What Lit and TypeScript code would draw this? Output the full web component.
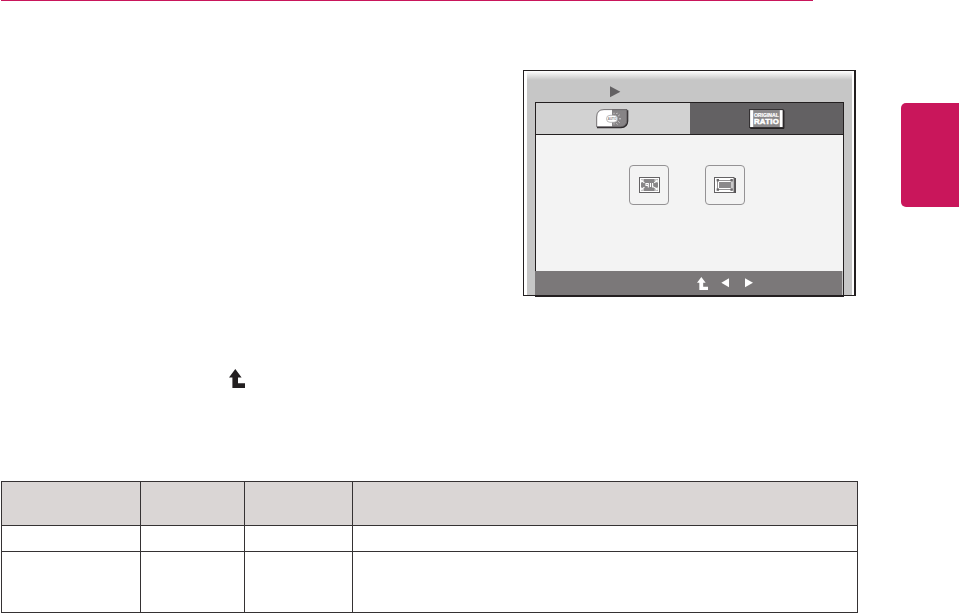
import { LitElement, html, css, svg } from "lit";
import { customElement, property } from "lit/decorators.js";

@customElement("osd-panel")
export class OsdPanel extends LitElement {
    autoIcon() {
        return html`
            <svg class="icon" width="34" height="21" viewBox="0 0 34 21">
                <path d="M8 1.2H32.3V12Q32 19.2 25 19.2H1V8Q1 1.2 8 1.2Z" fill="#2d2a2c" />
                <path d="M8 0.6H31V10.5Q31 17.8 24 17.8H0.7V8Q0.7 0.6 8 0.6Z" fill="#fff" />
                <path d="M16 0.6H31V10.5Q31 17.8 24 17.8H16Z" fill="#878486" />
                <path d="M8 0.6H31V10.5Q31 17.8 24 17.8H0.7V8Q0.7 0.6 8 0.6Z" fill="none" stroke="#555254" stroke-width="0.8" />
                <g stroke="#e4e3e4" stroke-width="1" stroke-linecap="round">
                    <path d="M18 4.2v.1M20.8 4.6l.3-.4M22.7 6.6l.5-.4M23.6 9.8h.8M22.7 12.8l.5.4M20.8 14.7l.3.4M18 14.9v.1" />
                </g>
                <rect x="10.5" y="6.3" width="11" height="7" rx="3.5" fill="#fff" stroke="#aaa8a9" stroke-width="0.8" />
                <text x="16" y="10.8" class="auto">AUTO</text>
            </svg>
        `;
    }

    ratioIcon() {
        return html`
            <svg class="icon" width="36" height="21" viewBox="0 0 36 21">
                <rect x="1" y="1" width="34.4" height="19" rx="1" fill="#242122" />
                <rect x="0.5" y="0.5" width="33.5" height="18" fill="#8b898b" stroke="#343133" />
                <rect x="1.2" y="1.2" width="3" height="16.8" fill="#fff" />
                <rect x="30.8" y="1.2" width="2.7" height="16.8" fill="#fff" />
                <text x="17.4" y="7.5" class="original" textLength="25" lengthAdjust="spacingAndGlyphs">ORIGINAL</text>
                <text x="17.4" y="15.3" class="ratio" textLength="25" lengthAdjust="spacing">RATIO</text>
            </svg>
        `;
    }

    fullIcon() {
        return html`
            <svg class="icon" width="22" height="17" viewBox="0 0 22 17">
                <rect x="0.5" y="0.5" width="20" height="15" fill="#fff" stroke="#646264" />
                <rect x="2" y="2" width="17" height="12" fill="#888688" />
                <path d="M2.2 5.4V3H5M3 4l2.4 1.8M18.2 5.4V3H15.4M17.6 4l-2.4 1.8M2.2 10.6v2.4H5M3 12l2.4-1.8M18.2 10.6v2.4H15.4M17.6 12l-2.4-1.8" fill="none" stroke="#fff" stroke-width="1.2" />
                <path d="M6.4 6.5H9.8M7 6.5V8.5H9.5M9.3 6V10.5M11.5 6V10M13.6 6V10H15" fill="none" stroke="#fff" stroke-width="1.1" />
            </svg>
        `;
    }

    originalIcon() {
        const corners = [
            [2.6, 2],
            [16.4, 2],
            [2.6, 11.4],
            [16.4, 11.4],
        ];
        return html`
            <svg class="icon" width="22" height="17" viewBox="0 0 22 17">
                <rect x="1" y="1" width="21" height="15" fill="#555254" />
                <rect x="0.5" y="0.5" width="19.5" height="15" fill="#fff" stroke="#646264" />
                <rect x="3.5" y="3.5" width="14.5" height="9" fill="#fff" stroke="#939193" />
                <rect x="5" y="5" width="12" height="6" fill="#8b898b" />
                ${corners.map(([x, y]) => svg`<rect x=${x} y=${y} width="2.4" height="2.4" fill="#6a686a" />`)}
            </svg>
        `;
    }

    render() {
        return html`
            <div class="screen">
                <div class="title">
                    <svg class="icon" width="11" height="12" viewBox="0 0 11 12"><path d="M0 0.2L10.4 5.8L0 11.2Z" fill="#636163" /></svg>
                </div>
                <div class="tabs">
                    <div class="tab">${this.autoIcon()}</div>
                    <div class="tab dark">${this.ratioIcon()}</div>
                </div>
                <div class="content">
                    <div class="option">${this.fullIcon()}</div>
                    <div class="option">${this.originalIcon()}</div>
                </div>
                <div class="footer">
                    <return-arrow class="back"></return-arrow>
                    <svg class="icon prev" width="8" height="10" viewBox="0 0 8 10"><path d="M8 0.3V9.3L0.3 4.8Z" fill="#fff" /></svg>
                    <svg class="icon" width="8" height="10" viewBox="0 0 8 10"><path d="M0 0.3V9.3L8 4.8Z" fill="#fff" /></svg>
                </div>
            </div>
        `;
    }
    static styles = css`
        :host {
            display: block;
            box-sizing: border-box;
            width: 333px;
            height: 226px;
            border: 1px solid #231f20;
            border-right-width: 2px;
            padding: 0 2px 0 3px;
        }
        .icon {
            display: block;
            flex: none;
        }
        .screen {
            width: 325px;
            height: 224px;
            background: linear-gradient(#fff 0, #c6c6c6 9px);
        }
        .title {
            height: 31px;
            box-sizing: border-box;
            padding: 15px 0 0 83px;
        }
        .tabs {
            display: flex;
            box-sizing: border-box;
            width: 309px;
            height: 33px;
            margin-left: 8px;
            border: 1px solid #231f20;
        }
        .tab {
            width: 154px;
            box-sizing: border-box;
            padding: 6px 0 0 60px;
            background: #d2d2d2;
        }
        .dark {
            width: 153px;
            padding-left: 59px;
            background: #636163;
        }
        .content {
            display: flex;
            box-sizing: border-box;
            gap: 36px;
            width: 309px;
            height: 136px;
            margin-left: 8px;
            padding: 30px 0 0 93px;
            background: #f3f3f3;
            border: 1px solid #231f20;
            border-width: 0 1px;
        }
        .option {
            box-sizing: border-box;
            width: 40px;
            height: 40px;
            padding: 11px 0 0 9px;
            border: 1px solid #949294;
            border-radius: 4px;
        }
        .option + .option {
            padding-left: 8px;
        }
        .footer {
            display: flex;
            box-sizing: border-box;
            width: 309px;
            height: 26px;
            margin-left: 8px;
            padding: 7px 0 0 162px;
            background: linear-gradient(90deg, #7b7879 307px, #c6c6c6 307px 308px, #231f20 308px);
            border-bottom: 2px solid #231f20;
        }
        .back {
            width: 11px;
            height: 13px;
            margin: -1px 13px 0 0;
            color: #fff;
        }
        .prev {
            margin-right: 16px;
        }
        .auto {
            font: bold 3px "Liberation Sans", sans-serif;
            text-anchor: middle;
            fill: #858385;
        }
        .original {
            font: bold 5.2px "Liberation Sans", sans-serif;
            text-anchor: middle;
            fill: #fff;
            stroke: #fff;
            stroke-width: 0.2px;
        }
        .ratio {
            font: bold 7.8px "Liberation Sans", sans-serif;
            text-anchor: middle;
            fill: #fff;
            stroke: #fff;
            stroke-width: 0.5px;
        }
    `;
}

@customElement("return-arrow")
export class ReturnArrow extends LitElement {
    render() {
        return html`
            <svg viewBox="0 0 16 19" preserveAspectRatio="none">
                <path d="M6.3 0L12.6 8.4H9V14.2H16V19H3.4V8.4H0Z" fill="currentColor" />
            </svg>
        `;
    }
    static styles = css`
        :host {
            display: block;
            flex: none;
        }
        svg {
            display: block;
            width: 100%;
            height: 100%;
        }
    `;
}

@customElement("app-root")
export class AppRoot extends LitElement {
    @property({ type: Number }) cells = 12;

    render() {
        return html`
            <div class="page">
                <div class="rule"></div>
                <div class="figure">
                    <osd-panel></osd-panel>
                    <div class="side"></div>
                </div>
                <return-arrow class="return"></return-arrow>
                <div class="table">${Array.from({ length: this.cells }, (_, i) => html`<div class=${i < 4 ? "cell head" : "cell"}></div>`)}</div>
            </div>
        `;
    }
    static styles = css`
        :host {
            display: block;
        }
        .page {
            width: 959px;
            height: 613px;
            overflow: hidden;
            background: #fff;
        }
        .rule {
            width: 812px;
            height: 1px;
            margin-left: 1px;
            background: #c9165b;
        }
        .figure {
            display: flex;
            box-sizing: border-box;
            height: 368px;
            padding: 69px 0 0 523px;
        }
        .side {
            width: 57.6px;
            height: 104px;
            margin: 33px 0 0 45.4px;
            background: #c9165b;
            border-radius: 5px 0 0 5px;
        }
        .return {
            width: 16px;
            height: 19px;
            margin-left: 229px;
            color: #231f20;
        }
        .table {
            display: grid;
            grid-template: 43px 25px 60px / 138px 103px 107px 504px;
            gap: 1px;
            box-sizing: border-box;
            width: 857px;
            margin: 93px 0 0 1px;
            padding: 1px;
            background: #353233;
        }
        .cell {
            background: #fff;
        }
        .head {
            background: #dad6d5;
        }
    `;
}
